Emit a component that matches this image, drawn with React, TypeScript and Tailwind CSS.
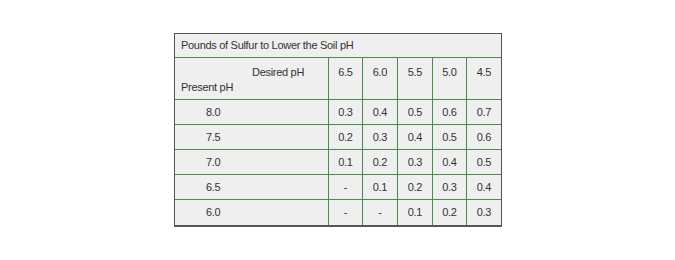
const desired = ["6.5", "6.0", "5.5", "5.0", "4.5"];

const rows: { present: string; values: string[] }[] = [
  { present: "8.0", values: ["0.3", "0.4", "0.5", "0.6", "0.7"] },
  { present: "7.5", values: ["0.2", "0.3", "0.4", "0.5", "0.6"] },
  { present: "7.0", values: ["0.1", "0.2", "0.3", "0.4", "0.5"] },
  { present: "6.5", values: ["-", "0.1", "0.2", "0.3", "0.4"] },
  { present: "6.0", values: ["-", "-", "0.1", "0.2", "0.3"] },
];

const colWidths = ["w-[34px]", "w-[35px]", "w-[35px]", "w-[34px]", "w-[34px]"];

export default function App() {
  return (
    <div className="w-[675px] h-[260px] bg-white pl-[174px] pt-[33px] font-['Liberation_Sans',Arial,sans-serif] text-[11px] tracking-[-0.3px] text-[#333]">
      <div className="w-[328px] border border-[#555] border-b-2 bg-[#efefef]">
        <div className="h-[24px] flex items-center pl-[6px] border-b border-[#4b8b4b]">
          Pounds of Sulfur to Lower the Soil pH
        </div>

        <div className="flex h-[42px] border-b border-[#4b8b4b]">
          <div className="w-[154px] border-r border-[#4b8b4b] relative">
            <span className="absolute left-[77px] top-[6px]">Desired pH</span>
            <span className="absolute left-[6px] top-[21px]">Present pH</span>
          </div>
          {desired.map((d, i) => (
            <div
              key={d}
              className={`${colWidths[i]} ${i < 4 ? "border-r border-[#4b8b4b]" : ""} text-center pt-[6px]`}
            >
              {d}
            </div>
          ))}
        </div>

        {rows.map((r, ri) => (
          <div
            key={r.present}
            className={`flex h-[25px] ${ri < rows.length - 1 ? "border-b border-[#4b8b4b]" : ""}`}
          >
            <div className="w-[154px] border-r border-[#4b8b4b] flex items-center pl-[31px]">
              {r.present}
            </div>
            {r.values.map((v, i) => (
              <div
                key={i}
                className={`${colWidths[i]} ${i < 4 ? "border-r border-[#4b8b4b]" : ""} flex items-center justify-center`}
              >
                {v}
              </div>
            ))}
          </div>
        ))}
      </div>
    </div>
  );
}
